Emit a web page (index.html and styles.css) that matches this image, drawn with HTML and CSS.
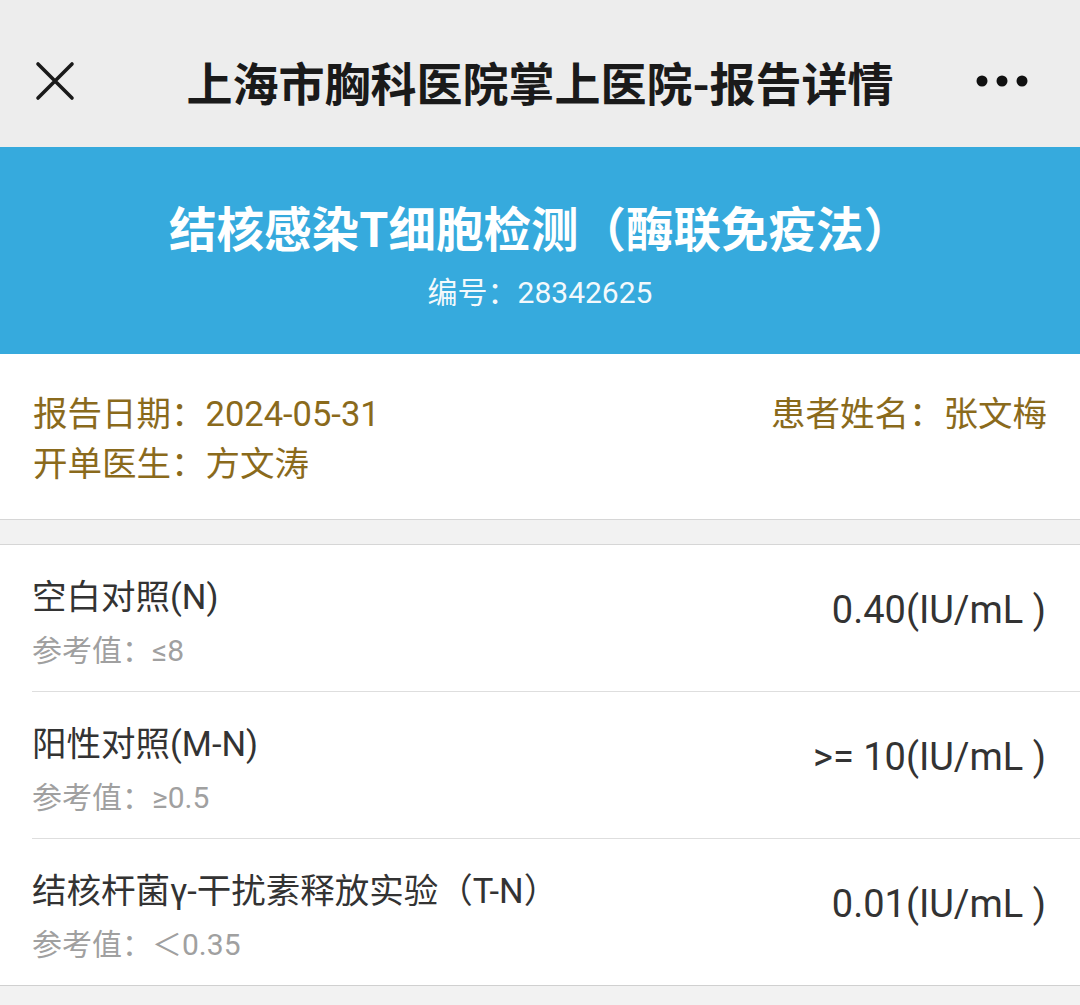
FILE: index.html
```html
<!DOCTYPE html>
<html lang="zh-CN">
<head>
<meta charset="utf-8">
<title>报告详情</title>
<link rel="stylesheet" href="styles.css">
</head>
<body>
<header class="topbar">
  <div class="tb-icon close">
    <svg width="40" height="40" viewBox="0 0 40 40"><path d="M3 3 L37 37 M37 3 L3 37" stroke="#1a1a1a" stroke-width="3.6" stroke-linecap="round" fill="none"/></svg>
  </div>
  <div class="tb-title">上海市胸科医院掌上医院-报告详情</div>
  <div class="tb-icon more">
    <svg width="56" height="14" viewBox="0 0 56 14"><circle cx="8" cy="7" r="5.5" fill="#111"/><circle cx="28" cy="7" r="5.5" fill="#111"/><circle cx="48" cy="7" r="5.5" fill="#111"/></svg>
  </div>
</header>
<section class="banner">
  <h1 class="banner-title">结核感染T细胞检测（酶联免疫法）</h1>
  <div class="banner-no">编号：28342625</div>
</section>
<section class="info">
  <div class="info-row">
    <span>报告日期：2024-05-31</span>
    <span>患者姓名：张文梅</span>
  </div>
  <div class="info-row">
    <span>开单医生：方文涛</span>
  </div>
</section>
<div class="spacer"></div>
<ul class="items">
  <li class="item">
    <div class="item-left">
      <div class="item-name">空白对照(N)</div>
      <div class="item-ref">参考值：≤8</div>
    </div>
    <div class="item-value">0.40(IU/mL )</div>
  </li>
  <li class="item">
    <div class="item-left">
      <div class="item-name">阳性对照(M-N)</div>
      <div class="item-ref">参考值：≥0.5</div>
    </div>
    <div class="item-value">&gt;= 10(IU/mL )</div>
  </li>
  <li class="item">
    <div class="item-left">
      <div class="item-name">结核杆菌γ-干扰素释放实验（T-N）</div>
      <div class="item-ref">参考值：＜0.35</div>
    </div>
    <div class="item-value">0.01(IU/mL )</div>
  </li>
</ul>
<div class="footer-gap"></div>
</body>
</html>
```
FILE: styles.css
```css
* { box-sizing: border-box; margin: 0; padding: 0; }
html, body { width: 1080px; height: 1005px; overflow: hidden; }
body {
  background: #f2f2f2;
  font-family: Roboto, "Noto Sans CJK SC", sans-serif;
  color: #333;
}
.topbar {
  height: 147px;
  background: #ededed;
  display: flex;
  align-items: center;
  padding: 14px 0 0 0;
}
.tb-icon { width: 110px; display: flex; align-items: center; }
.close { padding-left: 35px; }
.more { justify-content: flex-end; padding-right: 50px; }
.tb-title {
  flex: 1;
  text-align: center;
  font-family: "Noto Sans CJK SC", sans-serif;
  font-size: 46px;
  font-weight: 700;
  color: #1a1a1a;
  white-space: nowrap;
}
.banner {
  height: 207px;
  background: #36aadd;
  color: #fff;
  text-align: center;
  padding-top: 48px;
}
.banner-title {
  font-family: "Noto Sans CJK SC", sans-serif;
  font-size: 47.5px;
  font-weight: 700;
  line-height: 64px;
}
.banner-no {
  margin-top: 14px;
  font-size: 30px;
  line-height: 40px;
  color: #f3f9fc;
}
.info {
  background: #fff;
  height: 166px;
  padding: 35px 33px 0 33px;
  border-bottom: 1px solid #d6d6d6;
  color: #8a6a1c;
  font-size: 34.5px;
}
.info-row {
  display: flex;
  justify-content: space-between;
  line-height: 50px;
}
.spacer {
  height: 25px;
  background: #f2f2f2;
  border-bottom: 1px solid #d6d6d6;
}
.items { list-style: none; background: #fff; border-bottom: 1px solid #d0d0d0; }
.item {
  height: 147px;
  margin-left: 32px;
  padding: 28px 34px 0 0;
  display: flex;
  align-items: flex-start;
  justify-content: space-between;
  border-bottom: 1px solid #dedede;
}
.item:last-child { border-bottom: none; height: 146px; }
.item-name { font-size: 34.5px; line-height: 48px; color: #333; }
.item-ref { font-size: 30px; line-height: 44px; color: #a0a0a0; margin-top: 8px; }
.item-value { font-size: 38px; line-height: 52px; color: #333; margin-top: 11px; }
.footer-gap { height: 30px; background: #f2f2f2; }
```
